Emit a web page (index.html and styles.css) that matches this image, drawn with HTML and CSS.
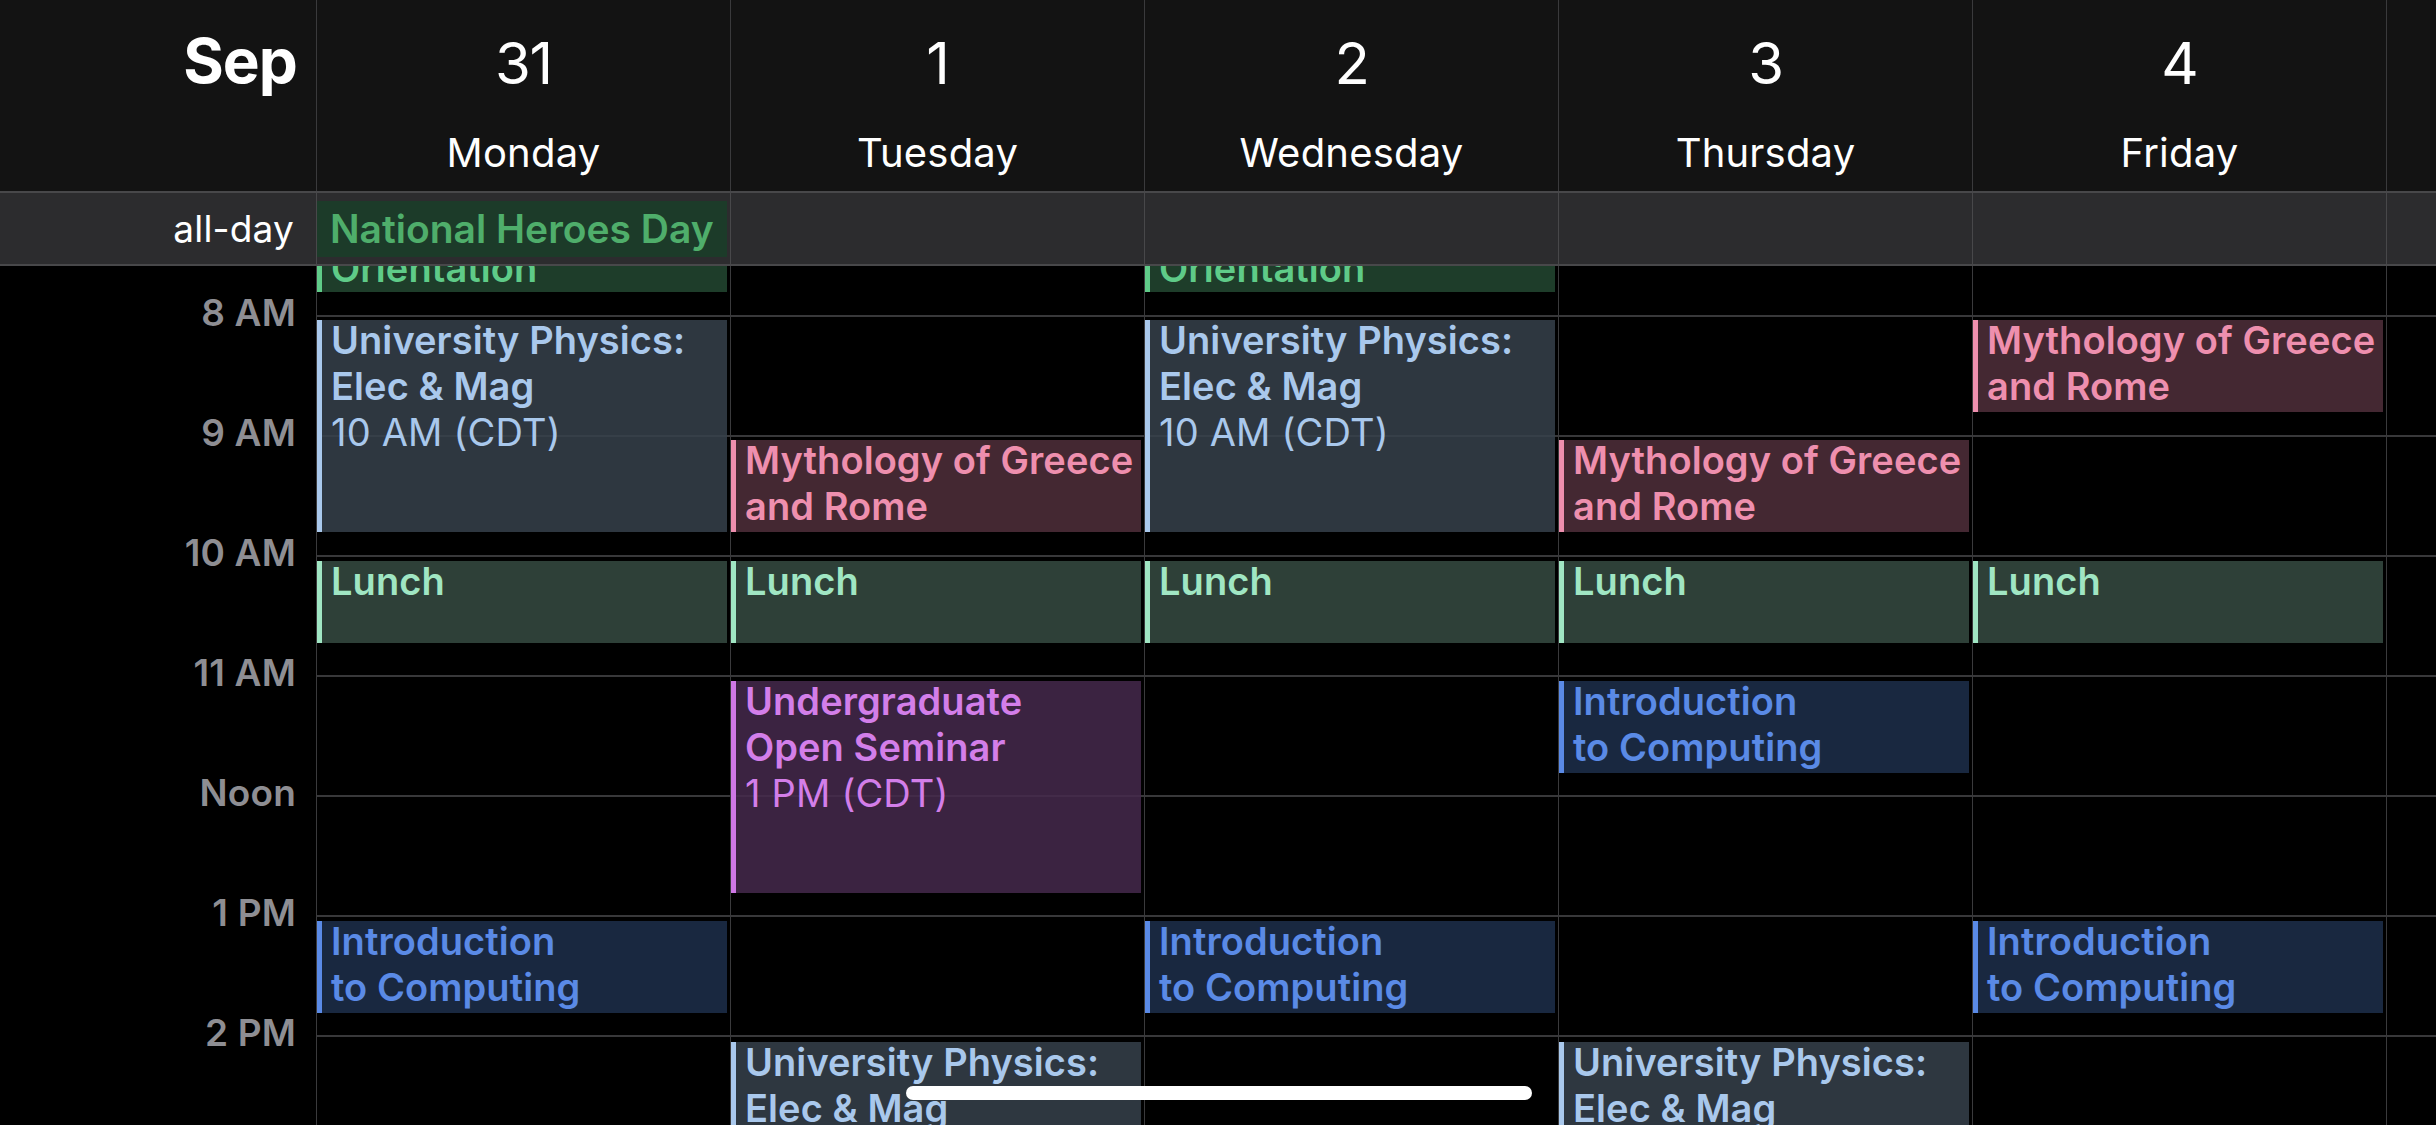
FILE: index.html
```html
<!DOCTYPE html>
<html lang="en">
<head>
<meta charset="utf-8">
<title>Calendar – Week</title>
<link rel="stylesheet" href="styles.css">
</head>
<body>
<div class="app">
  <header class="head">
    <div class="corner"><span class="month">Sep</span></div>
    <div class="day-head"><div class="num">31</div><div class="name">Monday</div></div>
    <div class="day-head"><div class="num">1</div><div class="name">Tuesday</div></div>
    <div class="day-head"><div class="num">2</div><div class="name">Wednesday</div></div>
    <div class="day-head"><div class="num">3</div><div class="name">Thursday</div></div>
    <div class="day-head"><div class="num">4</div><div class="name">Friday</div></div>
    <div class="day-head"></div>
  </header>

  <section class="allday">
    <div class="allday-label">all-day</div>
    <div class="allday-cell"><div class="allday-event">National Heroes Day</div></div>
    <div class="allday-cell"></div>
    <div class="allday-cell"></div>
    <div class="allday-cell"></div>
    <div class="allday-cell"></div>
    <div class="allday-cell"></div>
  </section>

  <main class="body">
    <div class="timeline">
      <div class="times">
        <div class="slot"></div>
        <div class="slot"><span>8 AM</span></div>
        <div class="slot"><span>9 AM</span></div>
        <div class="slot"><span>10 AM</span></div>
        <div class="slot"><span>11 AM</span></div>
        <div class="slot"><span>Noon</span></div>
        <div class="slot"><span>1 PM</span></div>
        <div class="slot"><span>2 PM</span></div>
        <div class="slot"></div>
      </div>

      <!-- Monday -->
      <div class="day">
        <div class="ev ev-green ev-sticky" style="top:5px;height:92px"><div class="ev-title">Orientation</div></div>
        <div class="ev ev-physics" style="top:125px;height:212px"><div class="ev-title">University Physics:<br>Elec &amp; Mag</div><div class="ev-time">10 AM (CDT)</div></div>
        <div class="ev ev-lunch" style="top:366px;height:82px"><div class="ev-title">Lunch</div></div>
        <div class="ev ev-intro" style="top:726px;height:92px"><div class="ev-title">Introduction<br>to Computing</div></div>
      </div>

      <!-- Tuesday -->
      <div class="day">
        <div class="ev ev-myth" style="top:245px;height:92px"><div class="ev-title">Mythology of Greece<br>and Rome</div></div>
        <div class="ev ev-lunch" style="top:366px;height:82px"><div class="ev-title">Lunch</div></div>
        <div class="ev ev-seminar" style="top:486px;height:212px"><div class="ev-title">Undergraduate<br>Open Seminar</div><div class="ev-time">1 PM (CDT)</div></div>
        <div class="ev ev-physics" style="top:847px;height:212px"><div class="ev-title">University Physics:<br>Elec &amp; Mag</div></div>
      </div>

      <!-- Wednesday -->
      <div class="day">
        <div class="ev ev-green ev-sticky" style="top:5px;height:92px"><div class="ev-title">Orientation</div></div>
        <div class="ev ev-physics" style="top:125px;height:212px"><div class="ev-title">University Physics:<br>Elec &amp; Mag</div><div class="ev-time">10 AM (CDT)</div></div>
        <div class="ev ev-lunch" style="top:366px;height:82px"><div class="ev-title">Lunch</div></div>
        <div class="ev ev-intro" style="top:726px;height:92px"><div class="ev-title">Introduction<br>to Computing</div></div>
      </div>

      <!-- Thursday -->
      <div class="day">
        <div class="ev ev-myth" style="top:245px;height:92px"><div class="ev-title">Mythology of Greece<br>and Rome</div></div>
        <div class="ev ev-lunch" style="top:366px;height:82px"><div class="ev-title">Lunch</div></div>
        <div class="ev ev-intro" style="top:486px;height:92px"><div class="ev-title">Introduction<br>to Computing</div></div>
        <div class="ev ev-physics" style="top:847px;height:212px"><div class="ev-title">University Physics:<br>Elec &amp; Mag</div></div>
      </div>

      <!-- Friday -->
      <div class="day">
        <div class="ev ev-myth" style="top:125px;height:92px"><div class="ev-title">Mythology of Greece<br>and Rome</div></div>
        <div class="ev ev-lunch" style="top:366px;height:82px"><div class="ev-title">Lunch</div></div>
        <div class="ev ev-intro" style="top:726px;height:92px"><div class="ev-title">Introduction<br>to Computing</div></div>
      </div>

      <!-- Saturday (partially visible) -->
      <div class="day"></div>
    </div>
  </main>

  <div class="home-indicator"></div>
</div>
</body>
</html>
```

FILE: styles.css
```css
* { box-sizing: border-box; }

html, body {
  margin: 0;
  padding: 0;
  background: #000;
}

body {
  font-family: "Inter", "Noto Sans", "Liberation Sans", sans-serif;
  color: #fff;
  width: 2436px;
  height: 1125px;
  overflow: hidden;
}

.app {
  position: relative;
  width: 2436px;
  height: 1125px;
  display: flex;
  flex-direction: column;
  overflow: hidden;
}

/* ---------- header ---------- */
.head {
  display: grid;
  grid-template-columns: 316px repeat(5, 414px) 1fr;
  height: 191px;
  background: #131313;
  flex: none;
}

.corner {
  display: flex;
  justify-content: flex-end;
  padding: 26px 19px 0 0;
}

.month {
  font-size: 62px;
  line-height: 70px;
  font-weight: 700;
  letter-spacing: -0.015em;
}

.day-head {
  border-left: 1px solid #3a3a3c;
  display: flex;
  flex-direction: column;
  align-items: center;
  padding-top: 28px;
}

.num {
  font-size: 58px;
  line-height: 70px;
  font-weight: 400;
  letter-spacing: -0.02em;
}

.name {
  margin-top: 31px;
  font-size: 40px;
  line-height: 48px;
  font-weight: 400;
  letter-spacing: 0.005em;
}

/* ---------- all-day row ---------- */
.allday {
  display: grid;
  grid-template-columns: 316px repeat(5, 414px) 1fr;
  height: 75px;
  background: #2c2c2e;
  border-top: 2px solid #48484a;
  border-bottom: 2px solid #48484a;
  flex: none;
}

.allday-label {
  display: flex;
  align-items: center;
  justify-content: flex-end;
  padding-right: 22px;
  font-size: 37px;
  font-weight: 400;
  letter-spacing: 0.005em;
}

.allday-cell {
  border-left: 1px solid #48484a;
  padding: 8px 3px 7px 0;
}

.allday-event {
  height: 56px;
  line-height: 56px;
  background: #1c3b29;
  color: #4fae6b;
  font-size: 39px;
  font-weight: 600;
  letter-spacing: 0;
  padding-left: 13px;
  white-space: nowrap;
  overflow: hidden;
}

/* ---------- timeline ---------- */
.body {
  flex: 1;
  overflow: hidden;
}

.timeline {
  display: grid;
  grid-template-columns: 316px repeat(5, 414px) 1fr;
  margin-top: -71px;
  height: 1080px;
}

.times {
  display: flex;
  flex-direction: column;
}

.slot {
  height: 120px;
  flex: none;
  padding-right: 20px;
  text-align: right;
}

.slot span {
  display: block;
  margin-top: -24px;
  font-size: 37px;
  line-height: 44px;
  font-weight: 600;
  color: #8e8e93;
  letter-spacing: 0.005em;
}

.day {
  position: relative;
  border-left: 1px solid #3a3a3c;
  background: repeating-linear-gradient(to bottom, #38383a 0, #38383a 2px, transparent 2px, transparent 120px);
}

/* ---------- events ---------- */
.ev {
  position: absolute;
  left: 0;
  right: 3px;
  border-left: 5px solid;
  padding: 0 0 0 9px;
  overflow: hidden;
  white-space: nowrap;
}

.ev-title {
  margin-top: -3px;
  font-size: 38px;
  line-height: 46px;
  font-weight: 600;
  letter-spacing: 0.002em;
}

.ev-time {
  font-size: 38px;
  line-height: 46px;
  font-weight: 400;
  letter-spacing: 0.005em;
}

.ev-sticky { padding-top: 48px; }

.ev-physics {
  background: rgba(54, 64, 75, 0.86);
  border-left-color: #a9c8ec;
  color: #a9c8ec;
}

.ev-myth {
  background: rgba(79, 47, 58, 0.86);
  border-left-color: #ee8fae;
  color: #ee8fae;
}

.ev-lunch {
  background: rgba(53, 75, 65, 0.86);
  border-left-color: #a0e6c3;
  color: #a0e6c3;
}

.ev-seminar {
  background: rgba(69, 41, 76, 0.86);
  border-left-color: #cf78e6;
  color: #d37ee9;
}

.ev-intro {
  background: rgba(29, 46, 75, 0.86);
  border-left-color: #5a8ae6;
  color: #5a8ae6;
}

.ev-green {
  background: rgba(34, 70, 48, 0.88);
  border-left-color: #5fcb88;
  color: #5fcb88;
}

/* ---------- home indicator ---------- */
.home-indicator {
  position: absolute;
  left: 906px;
  top: 1086px;
  width: 626px;
  height: 14px;
  border-radius: 7px;
  background: #fff;
}
```
